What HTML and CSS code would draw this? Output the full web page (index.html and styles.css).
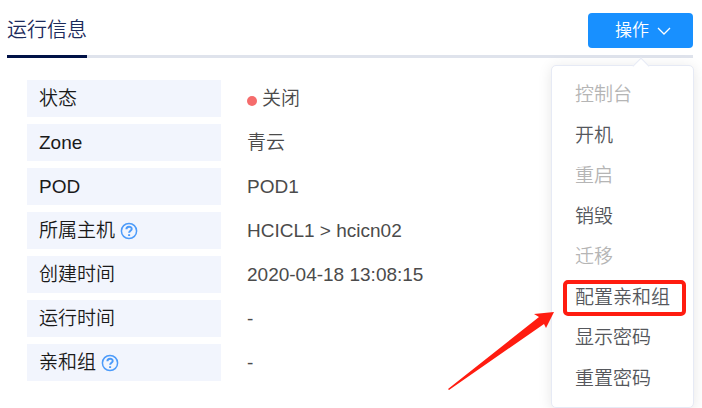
FILE: index.html
```html
<!DOCTYPE html>
<html lang="zh-CN">
<head>
<meta charset="utf-8">
<title>运行信息</title>
<link rel="stylesheet" href="styles.css">
</head>
<body>
<main class="panel">
  <header class="panel-head">
    <h1 class="tab">运行信息</h1>
    <div class="dropdown">
      <button class="trigger" type="button" aria-haspopup="true" aria-expanded="true">操作
        <svg class="chevron" viewBox="0 0 14 10" aria-hidden="true"><path d="M1 2l6 6 6-6"/></svg>
      </button>
      <div class="menu">
        <button class="item" type="button" disabled>控制台</button>
        <button class="item" type="button">开机</button>
        <button class="item" type="button" disabled>重启</button>
        <button class="item" type="button">销毁</button>
        <button class="item" type="button" disabled>迁移</button>
        <button class="item marked" type="button">配置亲和组
          <svg class="arrow" viewBox="0 0 108 80" aria-hidden="true"><path d="M107 1L87 3l5 3L1 78l1 1 95-66 2 4z"/></svg>
        </button>
        <button class="item" type="button">显示密码</button>
        <button class="item" type="button">重置密码</button>
      </div>
    </div>
  </header>
  <dl class="info">
    <dt>状态</dt><dd><span class="dot"></span>关闭</dd>
    <dt>Zone</dt><dd>青云</dd>
    <dt>POD</dt><dd>POD1</dd>
    <dt>所属主机
      <svg class="help" viewBox="0 0 18 18" aria-hidden="true"><circle cx="9" cy="9" r="7.6"/><path d="M6.4 7.2c0-3.4 5.3-3.2 5.3-.3 0 1.8-2.6 1.9-2.6 3.9M9.1 12.2v1.8"/></svg>
    </dt><dd>HCICL1 &gt; hcicn02</dd>
    <dt>创建时间</dt><dd>2020-04-18 13:08:15</dd>
    <dt>运行时间</dt><dd>-</dd>
    <dt>亲和组
      <svg class="help" viewBox="0 0 18 18" aria-hidden="true"><circle cx="9" cy="9" r="7.6"/><path d="M6.4 7.2c0-3.4 5.3-3.2 5.3-.3 0 1.8-2.6 1.9-2.6 3.9M9.1 12.2v1.8"/></svg>
    </dt><dd>-</dd>
  </dl>
</main>
</body>
</html>
```
FILE: styles.css
```css
* {
  box-sizing: border-box;
}

body {
  margin: 0;
  background: #fff;
  color: #4b4b4b;
  font: 350 19px/24px "Liberation Sans", "Noto Sans CJK SC", sans-serif;
}

button {
  border: 0;
  font: inherit;
}

.panel {
  min-height: 100vh;
  padding: 13px 9px 0 7px;
}

.panel-head {
  display: flex;
  justify-content: space-between;
  align-items: stretch;
  height: 45px;
  border-bottom: 3px solid #dfe3ec;
}

.tab {
  margin: 0 0 -3px;
  border-bottom: 3px solid #001146;
  color: #1c2b5c;
  font-size: 20px;
  font-weight: 350;
  line-height: 35px;
}

.dropdown {
  position: relative;
}

.trigger {
  display: flex;
  align-items: center;
  justify-content: center;
  gap: 8px;
  width: 105px;
  height: 35px;
  padding: 0 0 0 5px;
  border-radius: 4px;
  background: #1890ff;
  color: #fff;
  font-size: 17px;
}

.chevron {
  width: 14px;
  height: 10px;
  fill: none;
  stroke: #fff;
  stroke-width: 1.3;
}

.menu {
  position: absolute;
  z-index: 1;
  top: 52px;
  right: -1px;
  display: grid;
  grid-auto-rows: 1fr;
  width: 143px;
  min-height: 343px;
  padding: 9px 0 8px;
  border: 1px solid #e6eaf5;
  border-radius: 5px;
  background: #fff;
  box-shadow: 0 2px 14px rgba(0, 0, 0, 0.1);
}

.menu::before {
  content: "";
  position: absolute;
  top: -6px;
  left: 83px;
  width: 11px;
  height: 11px;
  border: solid #e6eaf5;
  border-width: 1px 0 0 1px;
  background: #fff;
  transform: rotate(45deg);
}

.item {
  position: relative;
  padding: 0 0 0 23px;
  background: none;
  color: #55575c;
  text-align: left;
}

.item:disabled {
  color: #b5b5b5;
}

.marked::before {
  content: "";
  position: absolute;
  inset: 2px 7px 2px 11px;
  border: 4px solid #ff1c10;
  border-radius: 5px;
}

.arrow {
  position: absolute;
  top: 33px;
  right: 138px;
  width: 108px;
  height: 80px;
  fill: #ff1c10;
}

.info {
  display: grid;
  grid-template-columns: 194px 1fr;
  gap: 7px 26px;
  margin: 22px 0 0 20px;
}

dt,
dd {
  display: flex;
  align-items: center;
  height: 37px;
  margin: 0;
}

dt {
  gap: 5px;
  padding-left: 12px;
  background: #f2f5fd;
  color: #1a1a1a;
}

.help {
  width: 18px;
  height: 18px;
  fill: none;
  stroke: #4c9bfa;
  stroke-width: 1.5;
}

.help path {
  stroke-width: 2;
}

.dot {
  width: 10px;
  height: 10px;
  margin: 4px 5px 0 0;
  border-radius: 50%;
  background: #f56c6c;
}
```
